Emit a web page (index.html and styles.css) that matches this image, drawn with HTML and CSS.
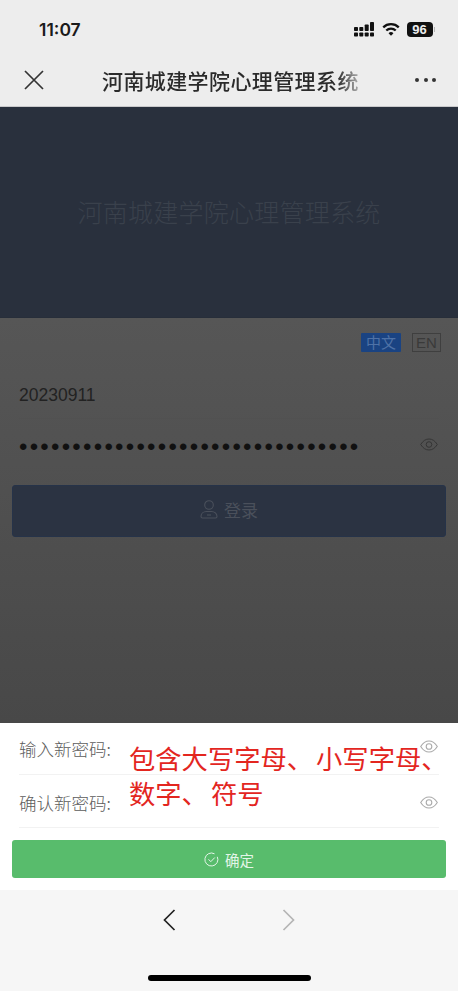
FILE: index.html
```html
<!DOCTYPE html>
<html lang="zh">
<head>
<meta charset="utf-8">
<title>河南城建学院心理管理系统</title>
<link rel="stylesheet" href="styles.css">
</head>
<body>
<div class="phone">
  <header class="topbar">
    <div class="status">
      <span class="time">11:07</span>
      <div class="status-icons">
        <svg class="signal" width="20" height="15" viewBox="0 0 20 15" fill="#111">
          <rect x="0" y="5" width="4" height="4" rx=".8"/><rect x="0" y="10.500" width="4" height="4" rx=".8"/>
          <rect x="5.300" y="5" width="4" height="4" rx=".8"/><rect x="5.300" y="10.500" width="4" height="4" rx=".8"/>
          <rect x="10.700" y="2.500" width="4" height="6.500" rx=".8"/><rect x="10.700" y="10.500" width="4" height="4" rx=".8"/>
          <rect x="16" y="0" width="4" height="9" rx=".8"/><rect x="16" y="10.500" width="4" height="4" rx=".8"/>
        </svg>
        <svg class="wifi" width="18" height="15" viewBox="0 0 19 15" fill="none" stroke="#111" stroke-width="2.400">
          <path d="M1.300 5.200a11.800 11.800 0 0 1 16.400 0"/>
          <path d="M4.500 8.600a7.200 7.200 0 0 1 10 0"/>
          <path d="M9.500 14.200l-2.600-2.800a3.700 3.700 0 0 1 5.200 0z" fill="#111" stroke="none"/>
        </svg>
        <span class="battery">96</span>
        <span class="battery-cap"></span>
      </div>
    </div>
    <nav class="navrow">
      <svg class="close" width="20" height="20" viewBox="0 0 20 20" fill="none" stroke="#333" stroke-width="1.700">
        <path d="M1 1l18 18M19 1L1 19"/>
      </svg>
      <h1 class="nav-title">河南城建学院心理管理系统</h1>
      <div class="more"><i></i><i></i><i></i></div>
    </nav>
  </header>

  <section class="hero">河南城建学院心理管理系统</section>

  <main class="login">
    <div class="lang">
      <span class="lang-cn">中文</span>
      <span class="lang-en">EN</span>
    </div>
    <div class="field field-user">20230911</div>
    <div class="field field-pass">
      <span class="dots">••••••••••••••••••••••••••••••••</span>
      <svg class="eye eye-dim" width="18" height="13" viewBox="0 0 18 13" fill="none" stroke="currentColor" stroke-width="1">
        <path d="M.7 6.500C3 2.800 5.700 1 9 1s6 1.800 8.300 5.500C15 10.200 12.300 12 9 12S3 10.200.7 6.500z"/>
        <circle cx="9" cy="6.500" r="2.800"/>
      </svg>
    </div>
    <button class="login-btn" type="button">
      <svg width="18" height="20" viewBox="0 0 18 20" fill="none" stroke="currentColor" stroke-width="1.100">
        <circle cx="9" cy="6" r="4.300"/>
        <path d="M2.500 19h13a1.500 1.500 0 0 0 1.500-1.500c0-3-2.500-5-5.500-5h-5C3.500 12.500 1 14.500 1 17.500A1.500 1.500 0 0 0 2.500 19z"/>
        <path d="M7 16h4"/>
      </svg>
      <span>登录</span>
    </button>
  </main>

  <section class="sheet">
    <div class="sheet-row sheet-row-first">
      <span class="sheet-label">输入新密码:</span>
      <svg class="eye" width="18" height="13" viewBox="0 0 18 13" fill="none" stroke="currentColor" stroke-width="1.100">
        <path d="M.7 6.500C3 2.800 5.700 1 9 1s6 1.800 8.300 5.500C15 10.200 12.300 12 9 12S3 10.200.7 6.500z"/>
        <circle cx="9" cy="6.500" r="2.800"/>
      </svg>
    </div>
    <div class="sheet-row">
      <span class="sheet-label">确认新密码:</span>
      <svg class="eye" width="18" height="13" viewBox="0 0 18 13" fill="none" stroke="currentColor" stroke-width="1.100">
        <path d="M.7 6.500C3 2.800 5.700 1 9 1s6 1.800 8.300 5.500C15 10.200 12.300 12 9 12S3 10.200.7 6.500z"/>
        <circle cx="9" cy="6.500" r="2.800"/>
      </svg>
    </div>
    <button class="ok-btn" type="button">
      <svg width="15" height="15" viewBox="0 0 15 15" fill="none" stroke="currentColor" stroke-width="1">
        <path d="M13.300 4.800A6.500 6.500 0 1 1 10.500 1.800"/>
        <path d="M4.500 7.300l2.300 2.400 4-4.200"/>
      </svg>
      <span>确定</span>
    </button>
    <p class="annotation">包含大写字母<span class="pause">、</span>小写字母、<br>数字<span class="pause">、</span>符号</p>
  </section>

  <footer class="browser-bar">
    <div class="arrows">
      <svg width="13" height="22" viewBox="0 0 13 22" fill="none" stroke="#222" stroke-width="1.700"><path d="M11.500 1L1.500 11l10 10"/></svg>
      <svg width="13" height="22" viewBox="0 0 13 22" fill="none" stroke="#b4b4b4" stroke-width="1.700"><path d="M1.500 1l10 10-10 10"/></svg>
    </div>
    <div class="home-bar"></div>
  </footer>
</div>
</body>
</html>
```
FILE: styles.css
```css
* { box-sizing: border-box; }
html, body { margin: 0; padding: 0; }
body {
  width: 458px;
  height: 991px;
  overflow: hidden;
  font-family: "Liberation Sans", "Noto Sans CJK SC", sans-serif;
}
.phone {
  position: relative;
  width: 458px;
  height: 991px;
  display: flex;
  flex-direction: column;
  background: #4f4f4f;
}

.topbar {
  height: 107px;
  background: #ededed;
  border-bottom: 1px solid #c9c9cb;
  flex: none;
}
.status {
  height: 58px;
  padding: 0 23px 0 39px;
  display: flex;
  align-items: center;
  justify-content: space-between;
}
.time {
  font-family: Inter, sans-serif;
  font-weight: 600;
  font-size: 17.500px;
  color: #1a1a1a;
}
.status-icons { display: flex; align-items: center; }
.signal { margin-right: 8px; }
.wifi { margin-right: 7px; }
.battery {
  width: 26px;
  height: 15px;
  background: #111;
  border-radius: 4px;
  color: #eee;
  font-family: "Liberation Sans", sans-serif;
  font-weight: 700;
  font-size: 13px;
  line-height: 15px;
  text-align: center;
}
.battery-cap {
  width: 1.500px;
  height: 5px;
  margin-left: 1px;
  background: #b5b5b5;
}
.navrow {
  height: 48px;
  padding: 0 22px 0 24px;
  display: flex;
  align-items: center;
  margin-top: -2px;
}
.close { flex: none; }
.nav-title {
  margin: 0 0 0 58px;
  width: 258px;
  white-space: nowrap;
  overflow: hidden;
  font-weight: 500;
  font-size: 21px;
  letter-spacing: .4px;
  color: #2b2b2b;
  font-family: "Noto Sans CJK SC", sans-serif;
  -webkit-mask-image: linear-gradient(to right, #000 91%, rgba(0,0,0,.3) 100%);
  mask-image: linear-gradient(to right, #000 91%, rgba(0,0,0,.3) 100%);
}
.more {
  margin-left: auto;
  display: flex;
  gap: 4.500px;
}
.more i {
  width: 4px;
  height: 4px;
  border-radius: 50%;
  background: #333;
}

.hero {
  flex: none;
  height: 211px;
  padding-bottom: 2px;
  background: #29303d;
  border-bottom: 1px solid #272e3a;
  display: flex;
  align-items: center;
  justify-content: center;
  font-family: "Noto Sans CJK SC", sans-serif;
  font-weight: 300;
  font-size: 25px;
  letter-spacing: .25px;
  color: #3a414c;
}

.login {
  flex: 1;
  background: linear-gradient(#565656 0, #484848 405px);
}
.lang {
  height: 49px;
  padding: 0 17px 0 0;
  display: flex;
  align-items: center;
  justify-content: flex-end;
  gap: 11px;
  font-family: "Noto Sans CJK SC", sans-serif;
  font-size: 15px;
}
.lang-cn {
  width: 40px;
  height: 19px;
  line-height: 18px;
  margin-top: -1px;
  text-align: center;
  background: #1a4382;
  color: #4f72a6;
  border-radius: 1px;
}
.lang-en {
  width: 29px;
  height: 19px;
  line-height: 17px;
  margin-top: -1px;
  text-align: center;
  border: 1px solid #3f3f3f;
  color: #3a3a3a;
  font-family: "Liberation Sans", sans-serif;
  font-size: 15px;
}
.field {
  margin: 0 19px;
  display: flex;
  align-items: center;
  justify-content: space-between;
  border-bottom: 1px solid #515151;
}
.field-user {
  height: 52px;
  padding-top: 5px;
  font-size: 17.500px;
  font-family: "Liberation Sans", sans-serif;
  color: #222;
}
.field-pass { height: 54px; }
.dots {
  margin-top: 3px;
  font-family: "Liberation Sans", sans-serif;
  font-size: 24px;
  letter-spacing: 2.270px;
  line-height: 1;
  color: #111;
}
.eye { color: #aaa; flex: none; }
.eye-dim { color: #353535; margin-right: 1px; margin-top: -2px; }
.login-btn {
  display: flex;
  align-items: center;
  justify-content: center;
  gap: 6px;
  width: 434px;
  height: 52px;
  margin: 12px 12px 0;
  padding: 0 0 4px;
  background: #2b3342;
  border: 1px solid #263349;
  border-radius: 3px;
  color: #4a505b;
  font-family: "Noto Sans CJK SC", sans-serif;
  font-size: 17px;
}

.sheet {
  position: relative;
  flex: none;
  height: 167px;
  background: #fff;
}
.sheet-row {
  margin: 0 19px;
  height: 53px;
  display: flex;
  align-items: center;
  justify-content: space-between;
  padding-top: 2px;
  border-bottom: 1px solid #f2f2f2;
}
.sheet-row-first { height: 52px; padding: 0 0 1px; }
.sheet-label {
  font-family: "Noto Sans CJK SC", sans-serif;
  font-size: 17.500px;
  font-weight: 300;
  color: #5c5c5c;
}
.sheet-row .eye { margin-right: 1px; }
.sheet-row-first .eye { margin-top: -4px; }
.ok-btn {
  display: flex;
  align-items: center;
  justify-content: center;
  gap: 6px;
  width: 434px;
  height: 38px;
  margin: 12px 12px 0;
  padding: 0;
  background: #58bc6c;
  border: 0;
  border-radius: 3px;
  color: #e4f5e8;
  font-family: "Noto Sans CJK SC", sans-serif;
  font-size: 14.500px;
}
.annotation {
  position: absolute;
  left: 129px;
  top: 17px;
  margin: 0;
  font-family: "Noto Sans CJK SC", sans-serif;
  font-size: 26.300px;
  line-height: 35px;
  color: #e3261f;
  white-space: nowrap;
}
.pause { letter-spacing: 3px; }

.browser-bar {
  position: relative;
  flex: none;
  height: 101px;
  background: #f6f6f6;
}
.arrows {
  position: absolute;
  left: 163px;
  top: 19px;
  width: 132px;
  display: flex;
  justify-content: space-between;
}
.home-bar {
  position: absolute;
  left: 148px;
  top: 85px;
  width: 163px;
  height: 6px;
  border-radius: 3px;
  background: #000;
}
```
